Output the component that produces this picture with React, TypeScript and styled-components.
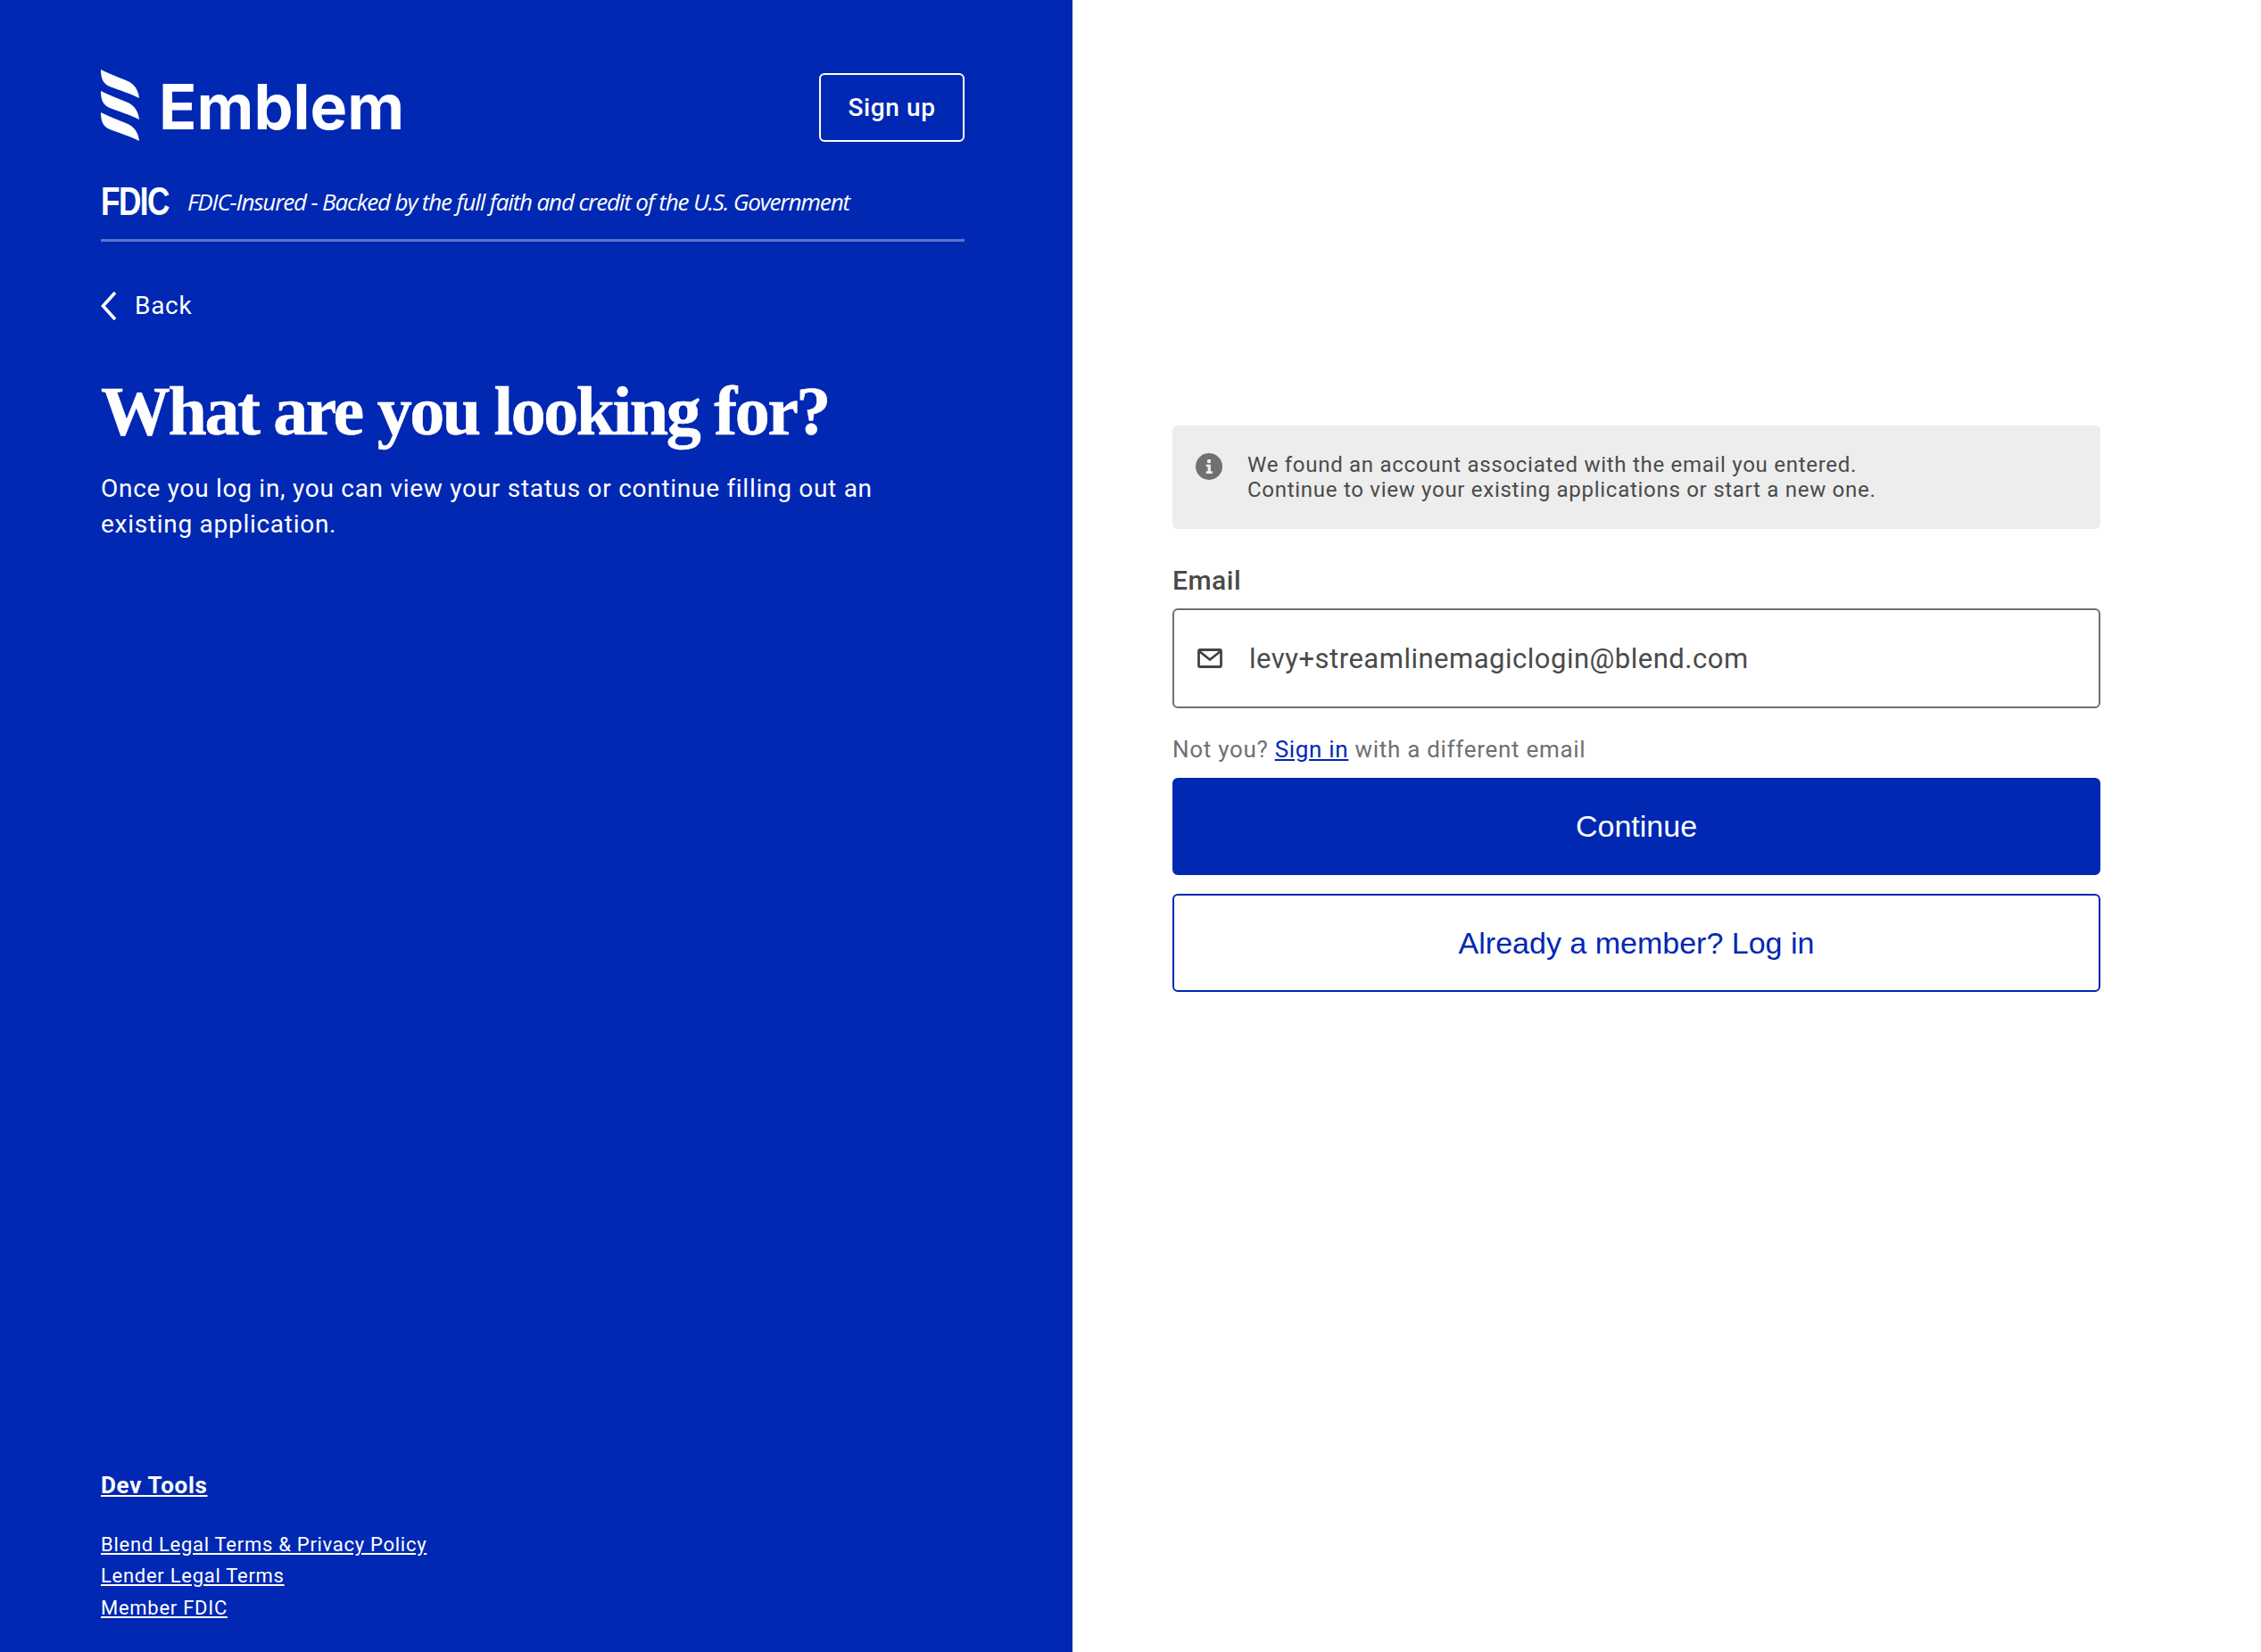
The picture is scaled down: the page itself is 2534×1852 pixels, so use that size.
import React from 'react'
import styled, { createGlobalStyle } from 'styled-components'

const GlobalStyle = createGlobalStyle`
  html, body {
    margin: 0;
    padding: 0;
    background: #fff;
  }
  * {
    box-sizing: border-box;
  }
`

const Logo = () => (
  <LogoWrap>
    <svg width='44' height='80' viewBox='0 0 44 80' fill='#fff'>
      <path d='M0 0 C8 4 18 8 28 12 C36 15 42 21 43 32 C34 27 20 23 10 19 C3 16 0 11 0 0 Z' />
      <path d='M0 24 C8 28 18 32 28 36 C36 39 42 45 43 56 C34 51 20 47 10 43 C3 40 0 35 0 24 Z' />
      <path d='M0 48 C8 52 18 56 28 60 C36 63 42 69 43 80 C34 75 20 71 10 67 C3 64 0 59 0 48 Z' />
    </svg>
    <LogoText>Emblem</LogoText>
  </LogoWrap>
)

const App = () => (
  <Page>
    <GlobalStyle />
    <LeftPanel>
      <div>
        <TopRow>
          <Logo />
          <SignUp>Sign up</SignUp>
        </TopRow>
        <FdicRow>
          <FdicMark>FDIC</FdicMark>
          <FdicText>FDIC-Insured - Backed by the full faith and credit of the U.S. Government</FdicText>
        </FdicRow>
        <BackRow>
          <svg width='18' height='32' viewBox='0 0 18 32' fill='none' stroke='#fff' strokeWidth='3.6'>
            <path d='M16 1 L2.5 16 L16 31' />
          </svg>
          <span>Back</span>
        </BackRow>
        <Heading>What are you looking for?</Heading>
        <Intro>Once you log in, you can view your status or continue filling out an existing application.</Intro>
      </div>
      <Footer>
        <DevTools href='#'>Dev Tools</DevTools>
        <LegalList>
          <LegalLink href='#'>Blend Legal Terms &amp; Privacy Policy</LegalLink>
          <LegalLink href='#'>Lender Legal Terms</LegalLink>
          <LegalLink href='#'>Member FDIC</LegalLink>
        </LegalList>
      </Footer>
    </LeftPanel>
    <RightPanel>
      <Form>
        <Notice>
          <svg width='30' height='30' viewBox='0 0 32 32'>
            <circle cx='16' cy='16' r='16' fill='#707070' />
            <circle cx='16' cy='9.5' r='2.4' fill='#ededed' />
            <path d='M12.5 13.5 H18 V21.5 H20 V24.5 H12.5 V21.5 H14.5 V16.3 H12.5 Z' fill='#ededed' />
          </svg>
          <NoticeText>
            We found an account associated with the email you entered.
            <br />
            Continue to view your existing applications or start a new one.
          </NoticeText>
        </Notice>
        <FieldLabel>Email</FieldLabel>
        <InputBox>
          <svg width='28' height='22' viewBox='0 0 28 22' fill='none' stroke='#444' strokeWidth='2.8'>
            <rect x='1.5' y='1.5' width='25' height='19' rx='1.5' />
            <path d='M2 3 L14 12.5 L26 3' />
          </svg>
          <InputValue>levy+streamlinemagiclogin@blend.com</InputValue>
        </InputBox>
        <NotYou>
          Not you? <SignInLink href='#'>Sign in</SignInLink> with a different email
        </NotYou>
        <Button $primary>Continue</Button>
        <Button>Already a member? Log in</Button>
      </Form>
    </RightPanel>
  </Page>
)

const Page = styled.div`
  display: flex;
  width: 100%;
  height: 1852px;
  overflow: hidden;
  font-family: Roboto, 'Liberation Sans', sans-serif;
`

const LeftPanel = styled.div`
  width: 1202px;
  height: 100%;
  background: #0028b2;
  color: #fff;
  padding: 78px 121px 32px 113px;
  display: flex;
  flex-direction: column;
  justify-content: space-between;
`

const TopRow = styled.div`
  display: flex;
  justify-content: space-between;
  align-items: flex-start;
`

const LogoWrap = styled.div`
  display: flex;
  align-items: flex-start;
  gap: 21px;
`

const LogoText = styled.div`
  font-family: Inter, sans-serif;
  font-size: 70px;
  font-weight: 700;
  line-height: 80px;
  padding-top: 2px;
  height: 80px;
`

const SignUp = styled.button`
  width: 163px;
  height: 77px;
  margin-top: 4px;
  background: transparent;
  border: 2px solid #fff;
  border-radius: 6px;
  color: #fff;
  font-family: Roboto, sans-serif;
  font-size: 28px;
  font-weight: 500;
  letter-spacing: 0.6px;
`

const FdicRow = styled.div`
  display: flex;
  align-items: center;
  gap: 21px;
  height: 76px;
  margin-top: 36px;
  padding-bottom: 12px;
  border-bottom: 3px solid #5d74cb;
`

const FdicMark = styled.div`
  width: 76px;
  font-family: 'Liberation Sans', sans-serif;
  font-size: 44px;
  font-weight: 700;
  letter-spacing: -2px;
  line-height: 37px;
  transform: scaleX(0.8);
  transform-origin: left center;
`

const FdicText = styled.div`
  font-family: 'Open Sans', sans-serif;
  font-size: 26px;
  font-style: italic;
  letter-spacing: -1.15px;
  line-height: 36px;
`

const BackRow = styled.div`
  display: flex;
  align-items: center;
  gap: 20px;
  margin-top: 54px;
  font-size: 28px;
  letter-spacing: 0.7px;
  line-height: 36px;
`

const Heading = styled.h1`
  margin: 54px 0 0;
  font-family: 'Liberation Serif', serif;
  font-size: 78px;
  font-weight: 700;
  line-height: 92px;
  letter-spacing: -2.5px;
  -webkit-text-stroke: 0.6px #fff;
`

const Intro = styled.p`
  margin: 21px 0 0;
  font-size: 28px;
  line-height: 40px;
  letter-spacing: 0.72px;
`

const Footer = styled.div`
  display: flex;
  flex-direction: column;
  align-items: flex-start;
`

const DevTools = styled.a`
  color: #fff;
  font-size: 26px;
  font-weight: 700;
  line-height: 34px;
  letter-spacing: 0.7px;
`

const LegalList = styled.div`
  display: flex;
  flex-direction: column;
  align-items: flex-start;
  margin-top: 32px;
`

const LegalLink = styled.a`
  color: #fff;
  font-size: 22px;
  line-height: 35.5px;
  letter-spacing: 0.72px;
`

const RightPanel = styled.div`
  flex: 1;
  padding: 477px 180px 0 112px;
`

const Form = styled.div`
  display: flex;
  flex-direction: column;
`

const Notice = styled.div`
  display: flex;
  gap: 28px;
  height: 116px;
  background: #ededed;
  border-radius: 6px;
  padding: 31px 26px 0;
`

const NoticeText = styled.div`
  margin-top: -1px;
  color: #4a4a4a;
  font-size: 24px;
  line-height: 28px;
  letter-spacing: 0.72px;
`

const FieldLabel = styled.label`
  margin-top: 39px;
  color: #4a4a4a;
  font-size: 30px;
  font-weight: 500;
  line-height: 38px;
  letter-spacing: 0.5px;
`

const InputBox = styled.div`
  display: flex;
  align-items: center;
  gap: 30px;
  height: 112px;
  margin-top: 12px;
  padding: 0 26px;
  border: 2px solid #707070;
  border-radius: 6px;
`

const InputValue = styled.div`
  color: #4a4a4a;
  font-size: 31px;
  letter-spacing: 0.5px;
`

const NotYou = styled.div`
  margin-top: 30px;
  margin-bottom: 16px;
  color: #707070;
  font-size: 26px;
  line-height: 32px;
  letter-spacing: 0.7px;
`

const SignInLink = styled.a`
  color: #0028b2;
`

const Button = styled.button<{ $primary?: boolean }>`
  height: ${(p) => (p.$primary ? '109px' : '110px')};
  margin-bottom: 21px;
  background: ${(p) => (p.$primary ? '#0028b2' : '#fff')};
  color: ${(p) => (p.$primary ? '#fff' : '#0028b2')};
  border: 2px solid #0028b2;
  border-radius: 6px;
  font-family: 'Liberation Sans', sans-serif;
  font-size: 34px;
`

export default App
